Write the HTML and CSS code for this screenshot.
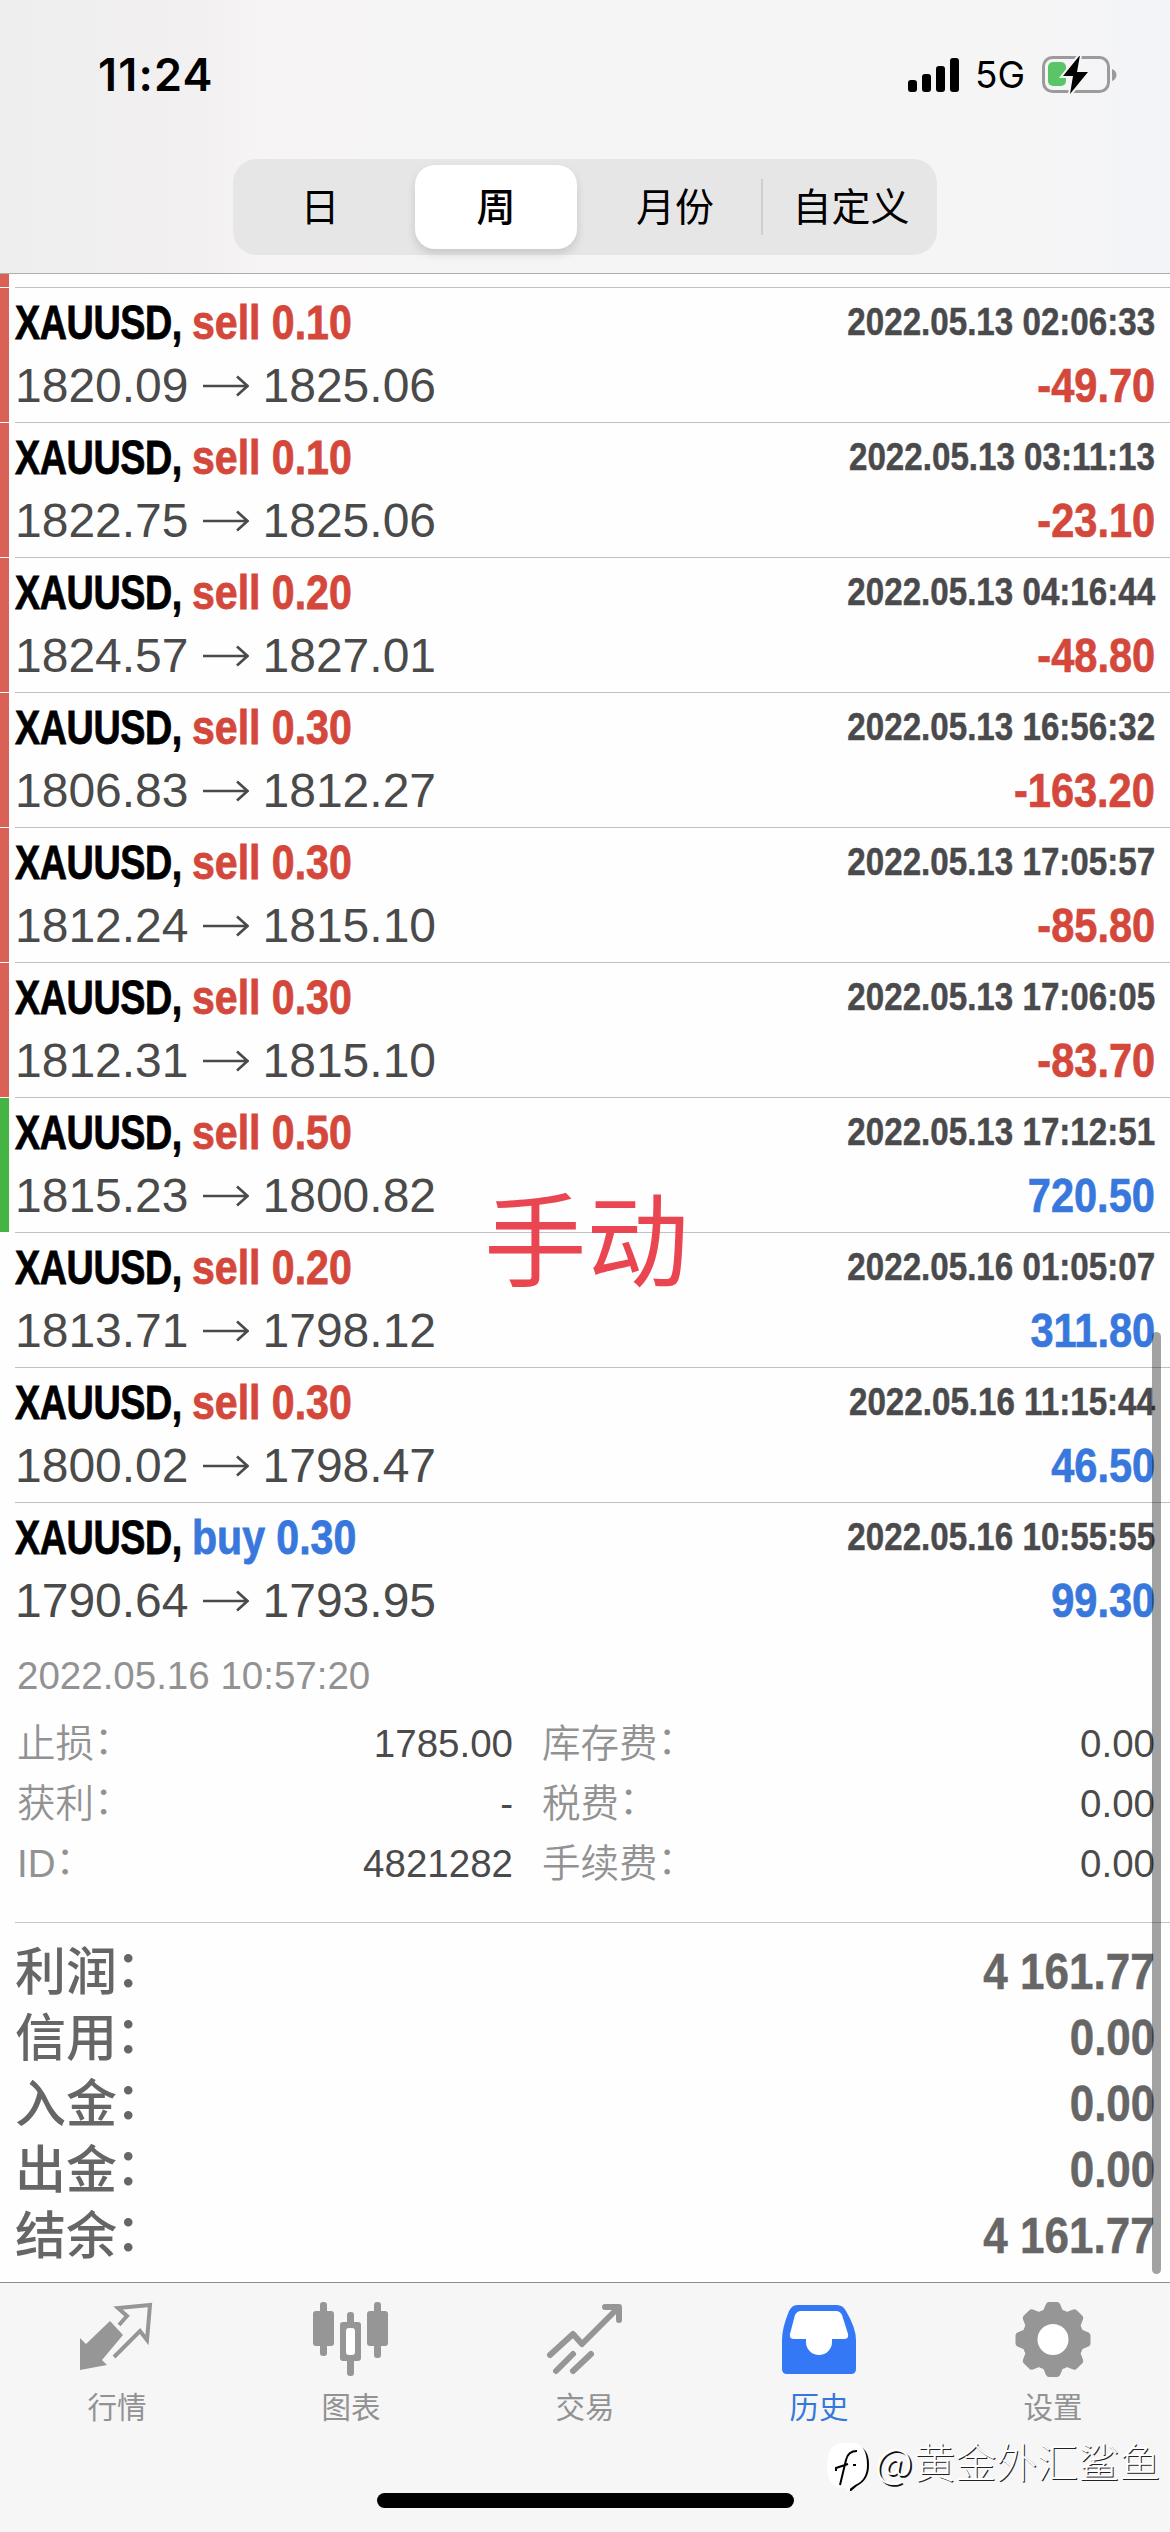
FILE: index.html
```html
<!DOCTYPE html>
<html lang="zh-CN"><head><meta charset="utf-8"><title>历史</title><link rel="stylesheet" href="styles.css"></head>
<body>
<div class="app">
<header class="header">
  <div class="status">
    <span class="clock">11:24</span>
    <div class="status-right">
      <svg class="signal" width="52" height="34" viewBox="0 0 52 34"><rect x="0" y="22" width="9" height="12" rx="3"/><rect x="14" y="16" width="9" height="18" rx="3"/><rect x="28" y="8" width="9" height="26" rx="3"/><rect x="42" y="0" width="9" height="34" rx="3"/></svg>
      <span class="network">5G</span>
      <svg width="75" height="38" viewBox="0 0 75 38"><rect x="1.5" y="1.500" width="65" height="34" rx="9" fill="none" stroke="#9b9b9b" stroke-width="3"/><path d="M70 13c6 2 6 10 0 12z" fill="#9b9b9b"/><rect x="6" y="6" width="18" height="24" rx="5" fill="#5ac566"/><path d="M38 -1L21 20H31L28 38L46 16H35Z" fill="#000" stroke="#f5f5f5" stroke-width="4" paint-order="stroke"/></svg>
    </div>
  </div>
  <nav class="segments"><span class="segment day">日</span><span class="segment active">周</span><span class="segment month">月份</span><span class="segment divided">自定义</span></nav>
</header>
<main class="list" id="list">
  <div class="peek"><i class="bar red"></i></div>
</main>
<section class="details">
  <div class="closed">2022.05.16 10:57:20</div>
  <div class="grid">
    <span>止损<i class="colon">：</i></span><b>1785.00</b><span>库存费<i class="colon">：</i></span><b>0.00</b>
    <span>获利<i class="colon">：</i></span><b>-</b><span>税费<i class="colon">：</i></span><b>0.00</b>
    <span>ID<i class="colon">：</i></span><b>4821282</b><span>手续费<i class="colon">：</i></span><b>0.00</b>
  </div>
</section>
<section class="totals">
  <div><span>利润<i class="colon">：</i></span><b>4 161.77</b></div>
  <div><span>信用<i class="colon">：</i></span><b>0.00</b></div>
  <div><span>入金<i class="colon">：</i></span><b>0.00</b></div>
  <div><span>出金<i class="colon">：</i></span><b>0.00</b></div>
  <div><span>结余<i class="colon">：</i></span><b>4 161.77</b></div>
</section>
<footer class="tabs">
  <div class="tab"><svg width="80" height="86" viewBox="0 0 80 86"><path d="M3 36L9 42L33 19L46 33L25 58L30 63L3 68Z" fill="#969696"/><path d="M42 23L50 14L41 6L73 3L70 38L63 29L37 55" fill="none" stroke="#969696" stroke-width="4"/></svg><span>行情</span></div>
  <div class="tab"><svg width="80" height="86" viewBox="0 0 80 86" fill="#969696"><rect x="2" y="9" width="21" height="35" rx="3"/><rect x="9" y="0" width="7" height="54" rx="3"/><rect x="56" y="9" width="21" height="35" rx="3"/><rect x="63" y="0" width="7" height="56" rx="3"/><rect x="29" y="20" width="21" height="39" rx="3"/><rect x="36" y="10" width="7" height="64" rx="3"/><rect x="35" y="26" width="9" height="27" rx="3" fill="#fff"/></svg><span>图表</span></div>
  <div class="tab"><svg width="80" height="86" viewBox="0 0 80 86" fill="none" stroke="#969696" stroke-width="6" stroke-linecap="round" stroke-linejoin="round"><path d="M5 53L28 32L37 42L72 7M60 5H74V18M11 69L28 52M28 69L46 52"/></svg><span>交易</span></div>
  <div class="tab selected"><svg width="80" height="86" viewBox="0 0 80 86"><path fill="#3578f6" d="M18 3H58Q64 3 67 9Q77 26 77 38V67Q77 72 72 72H8Q3 72 3 67V38Q3 26 10 9Q13 3 18 3Z"/><path fill="#fff" d="M22 9Q18 9 16 13L11 32Q10 37 15 37H27V40A13 13 0 0 0 53 40V37H65Q70 37 69 32L63 13Q61 9 57 9Z"/></svg><span>历史</span></div>
  <div class="tab"><svg width="80" height="86" viewBox="0 0 80 86"><g fill="#969696"><circle cx="40" cy="37.500" r="31"/><path d="M30 9L33 2Q34 0 36 0H44Q46 0 47 2L50 9V66L47 73Q46 75 44 75H36Q34 75 33 73L30 66Z"/><path transform="rotate(45 40 37.500)" d="M30 9L33 2Q34 0 36 0H44Q46 0 47 2L50 9V66L47 73Q46 75 44 75H36Q34 75 33 73L30 66Z"/><path transform="rotate(90 40 37.500)" d="M30 9L33 2Q34 0 36 0H44Q46 0 47 2L50 9V66L47 73Q46 75 44 75H36Q34 75 33 73L30 66Z"/><path transform="rotate(135 40 37.500)" d="M30 9L33 2Q34 0 36 0H44Q46 0 47 2L50 9V66L47 73Q46 75 44 75H36Q34 75 33 73L30 66Z"/></g><circle cx="40" cy="37.500" r="15.500" fill="#fff"/></svg><span>设置</span></div>
</footer>
<div class="home"></div>
<div class="scrollbar"></div>
<div class="note">手动</div>
<div class="watermark"><svg width="44" height="48" viewBox="0 0 44 48"><path d="M14 2H28Q42 4 42 22Q42 37 30 43L23 49V44H14Q2 41 2 24Q2 5 14 2Z" fill="#000"/><path d="M13 0H27Q40 2 40 22Q40 37 28 42L20 48V45H13Q0 42 0 23Q0 3 13 0Z" fill="#fff"/><path d="M13 42L19 17Q21 8 30 8M9 28V25L21 21M26 22H29" fill="none" stroke="#000" stroke-width="2"/></svg><span class="at">@</span><span>黄金外汇鲨鱼</span></div>
</div>
<script src="script.js"></script>
</body></html>
```
FILE: script.js
```js
const trades = [
  ["sell", "0.10", "1820.09", "1825.06", "2022.05.13 02:06:33", "-49.70", "red"],
  ["sell", "0.10", "1822.75", "1825.06", "2022.05.13 03:11:13", "-23.10", "red"],
  ["sell", "0.20", "1824.57", "1827.01", "2022.05.13 04:16:44", "-48.80", "red"],
  ["sell", "0.30", "1806.83", "1812.27", "2022.05.13 16:56:32", "-163.20", "red"],
  ["sell", "0.30", "1812.24", "1815.10", "2022.05.13 17:05:57", "-85.80", "red"],
  ["sell", "0.30", "1812.31", "1815.10", "2022.05.13 17:06:05", "-83.70", "red"],
  ["sell", "0.50", "1815.23", "1800.82", "2022.05.13 17:12:51", "720.50", "green"],
  ["sell", "0.20", "1813.71", "1798.12", "2022.05.16 01:05:07", "311.80", ""],
  ["sell", "0.30", "1800.02", "1798.47", "2022.05.16 11:15:44", "46.50", ""],
  ["buy", "0.30", "1790.64", "1793.95", "2022.05.16 10:55:55", "99.30", ""],
];
document.getElementById("list").insertAdjacentHTML("beforeend", trades.map(
  ([side, lots, open, close, time, profit, bar]) => `<article class="trade">
    <i class="bar ${bar}"></i>
    <div class="body">
      <div class="line first"><span class="title"><span class="symbol">XAUUSD,</span><span class="side ${side}">${side} ${lots}</span></span><span class="time">${time}</span></div>
      <div class="line second"><span class="prices"><span>${open}</span><svg width="46" height="22" viewBox="0 0 46 22"><path d="M0 11H44M34 1.500L44.500 11L34 20.500" fill="none" stroke="#4a4a4a" stroke-width="2.600"/></svg><span>${close}</span></span><span class="profit ${profit[0] === "-" ? "loss" : "gain"}">${profit}</span></div>
    </div>
  </article>`).join(""));
```
FILE: styles.css
```css
* { box-sizing: border-box; }
body { margin: 0; background: #fff; font-family: "Liberation Sans", "Noto Sans CJK SC", sans-serif; }
.app { position: relative; width: 1170px; height: 2532px; overflow: hidden; display: flex; flex-direction: column; background: #fefefe; }
.header { height: 274px; flex: none; border-bottom: 1px solid #adadad; background: linear-gradient(90deg, #efeeef 0, #f2f0f1 200px, #f6f4f4 260px, #f5f5f6 700px, #f5f5f6 1050px, #f3f4f9 100%); display: flex; flex-direction: column; align-items: center; }
.status { width: 100%; height: 159px; padding: 50px 53px 0 98px; display: flex; justify-content: space-between; align-items: flex-start; }
.clock { font: 600 45px/50px Inter, sans-serif; letter-spacing: 1.2px; }
.status-right { display: flex; align-items: center; height: 50px; }
.network { font: 400 37px/50px Inter, sans-serif; margin: 0 17px 0 15px; }
.segments { width: 704px; height: 96px; border-radius: 24px; background: #e7e6e7; padding: 6px; display: grid; grid-template-columns: 176px 162px 184px 170px; align-items: center; text-align: center; font: 400 39px/79px "Noto Sans CJK SC", sans-serif; }
.segment { height: 84px; }
.segment.active { background: #fff; border-radius: 20px; font-weight: 500; box-shadow: 0 5px 10px rgba(0,0,0,.13); }
.day { padding-right: 14px; }
.month { padding-left: 12px; }
.divided { padding-left: 10px; background: linear-gradient(#cfcfd1, #cfcfd1) 0 50% / 2px 56px no-repeat; }
.list { flex: none; }
.peek { height: 13px; display: flex; }
.bar { width: 9px; flex: none; }
.red { background: #da6156; }
.green { background: #46b445; }
.trade { height: 135px; display: flex; gap: 6px; }
.trade .bar { margin-top: 1px; }
.body { flex: 1; border-top: 1px solid #bfc1c2; padding: 4px 15px 0 0; }
.line { display: flex; justify-content: space-between; align-items: flex-start; }
.first { height: 62px; }
.title { display: flex; font-weight: 700; font-size: 48px; line-height: 62px; white-space: nowrap; -webkit-text-stroke: .8px currentColor; }
.symbol { width: 177px; color: #000; transform: scaleX(.785); transform-origin: left; letter-spacing: -.5px; }
.side { transform: scaleX(.855); transform-origin: left; }
.sell, .loss { color: #d4483c; }
.buy, .gain { color: #3878dc; }
.time { font-weight: 700; font-size: 39px; line-height: 60px; color: #4a4a4c; transform: scaleX(.85); transform-origin: right; -webkit-text-stroke: .5px currentColor; }
.second { line-height: 64px; font-size: 48px; color: #4a4a4a; }
.prices { display: flex; align-items: center; gap: 14px; }
.profit { font-weight: 700; transform: scaleX(.865); transform-origin: right; -webkit-text-stroke: .7px currentColor; }
.details { flex: none; height: 285px; margin-left: 15px; padding: 6px 15px 0 2px; border-bottom: 1px solid #c4c5c6; color: #929292; font-size: 38.5px; margin-top: 1px; }
.closed { line-height: 64px; }
.grid { margin-top: 6px; display: grid; grid-template-columns: 150px 346px 1fr 200px; grid-auto-rows: 60px; line-height: 60px; font-weight: 350; }
.grid b { font-weight: 400; color: #4a4a4a; text-align: right; }
.grid span:nth-child(4n+3) { padding-left: 29px; }
.colon { display: inline-block; height: 1em; line-height: 1em; font-style: normal; transform: translateY(-.07em); }
.totals { flex: none; height: 359px; padding: 16px 15px 0 15px; font-weight: 500; font-size: 51px; line-height: 66px; color: #666; }
.totals div { display: flex; justify-content: space-between; height: 66px; }
.totals span { font-family: "Noto Sans CJK SC", sans-serif; line-height: 59px; height: 59px; }
.totals b { font-size: 50px; transform: scaleX(.88); transform-origin: right; -webkit-text-stroke: .5px currentColor; }
.totals .colon { transform: translate(-.03em, -.06em); }
.tabs { flex: none; height: 250px; border-top: 1px solid #8d8d8f; background: #f6f6f6; padding-top: 19px; display: grid; grid-template-columns: repeat(5, 1fr); }
.tab { display: flex; flex-direction: column; align-items: center; color: #929292; font: 400 29.500px/35px "Noto Sans CJK SC", sans-serif; }
.selected { color: #3578dc; }
.home { position: absolute; left: 377px; top: 2493px; width: 417px; height: 15px; border-radius: 8px; background: #000; }
.scrollbar { position: absolute; left: 1152px; top: 1332px; width: 9px; height: 942px; border-radius: 5px; background: rgba(0,0,0,.36); }
.note { position: absolute; left: 484px; top: 1183px; font: 400 102.500px/104px "Noto Sans CJK SC", sans-serif; color: #ea4651; }
.watermark { position: absolute; left: 827px; top: 2436px; display: flex; align-items: center; height: 48px; color: #fff; font: 300 41px/48px "Noto Sans CJK SC", sans-serif; text-shadow: 1px 1px 0 #222; white-space: nowrap; }
.watermark svg { margin-top: 14px; }
.at { margin: 0 2px 0 4px; text-shadow: 2px 2px 0 #111; }
```
